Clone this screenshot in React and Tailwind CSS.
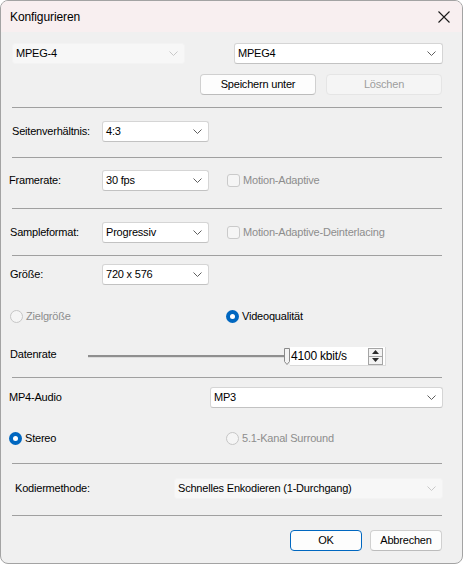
import React from 'react';

const font = { fontFamily: '"Liberation Sans", Arial, sans-serif' };

function Chevron({ color = '#5f5f5f' }) {
  return (
    <svg width="9" height="5" viewBox="0 0 9 5" className="shrink-0">
      <path d="M0.5 0.5 L4.5 4.5 L8.5 0.5" fill="none" stroke={color} strokeWidth="1" />
    </svg>
  );
}

function Combo({ w, text, disabled }) {
  return (
    <div
      className={`h-[21px] shrink-0 flex items-center justify-between pl-[3px] pr-[6px] rounded-[3px] border ${
        disabled ? 'bg-[#f7f7f7] border-[#f3f3f3]' : 'bg-white border-[#d5d5d5] border-b-[#c2c2c2]'
      }`}
      style={{ width: w }}
    >
      <span className="text-[11px] text-black leading-none">{text}</span>
      <Chevron color={disabled ? '#c8c8c8' : '#5f5f5f'} />
    </div>
  );
}

function Button({ w, children, disabled, primary }) {
  return (
    <div
      className={`h-[21px] shrink-0 flex items-center justify-center rounded-[4px] border text-[11px] ${
        disabled
          ? 'bg-[#f5f5f5] border-[#e5e5e5] text-[#9d9d9d]'
          : primary
          ? 'bg-[#fdfdfd] border-[#0067c0] text-black'
          : 'bg-[#fdfdfd] border-[#d0d0d0] border-b-[#bcbcbc] text-black'
      }`}
      style={{ width: w }}
    >
      {children}
    </div>
  );
}

function Sep({ mt }) {
  return <div className={`w-[430px] h-px bg-[#a0a0a0] ${mt}`} />;
}

function Radio({ checked, disabled, label }) {
  return (
    <div className="flex items-center gap-[3px]">
      {checked ? (
        <div className="w-[13px] h-[13px] rounded-full bg-[#0067c0] flex items-center justify-center">
          <div className="w-[5px] h-[5px] rounded-full bg-white" />
        </div>
      ) : (
        <div className="w-[13px] h-[13px] rounded-full border border-[#c6c6c6] bg-[#f5f5f5]" />
      )}
      <span className={`text-[11px] ${disabled ? 'text-[#8d8d8d]' : 'text-black'}`}>{label}</span>
    </div>
  );
}

function Check({ label }) {
  return (
    <div className="flex items-center gap-[3px]">
      <div className="w-[13px] h-[13px] rounded-[3px] border border-[#cacaca] bg-[#f5f5f5]" />
      <span className="text-[11px] text-[#8d8d8d]">{label}</span>
    </div>
  );
}

export default function App() {
  return (
    <div
      className="w-[463px] h-[564px] flex flex-col bg-[#f0f0f0] border border-[#a3a3a3] rounded-[8px] overflow-hidden"
      style={font}
    >
      {/* title bar */}
      <div className="h-[31px] shrink-0 flex items-center justify-between bg-[#f8eff0] pl-[9px] pr-[12px]">
        <span className="text-[12px] text-black tracking-[-0.1px]">Konfigurieren</span>
        <svg width="12" height="12" viewBox="0 0 12 12">
          <path d="M0.5 0.5 L11.5 11.5 M11.5 0.5 L0.5 11.5" stroke="#1a1a1a" strokeWidth="1.1" />
        </svg>
      </div>

      <div className="flex flex-col pl-[11px] tracking-[-0.2px]">
        <div className="mt-[11px] flex">
          <Combo w={173} text="MPEG-4" disabled />
          <div className="ml-[49px]">
            <Combo w={209} text="MPEG4" />
          </div>
        </div>

        <div className="mt-[10px] ml-[188px] flex gap-[10px]">
          <Button w={116}>Speichern unter</Button>
          <Button w={116} disabled>Löschen</Button>
        </div>

        <Sep mt="mt-[12px]" />

        <div className="mt-[13px] flex items-center">
          <span className="w-[90px] text-[11px]">Seitenverhältnis:</span>
          <Combo w={107} text="4:3" />
        </div>

        <Sep mt="mt-[15px]" />

        <div className="mt-[12px] flex items-center">
          <span className="w-[93px] -ml-[3px] text-[11px]">Framerate:</span>
          <Combo w={107} text="30 fps" />
          <div className="ml-[18px]">
            <Check label="Motion-Adaptive" />
          </div>
        </div>

        <Sep mt="mt-[17px]" />

        <div className="mt-[13px] flex items-center">
          <span className="w-[92px] -ml-[2px] text-[11px]">Sampleformat:</span>
          <Combo w={107} text="Progressiv" />
          <div className="ml-[18px]">
            <Check label="Motion-Adaptive-Deinterlacing" />
          </div>
        </div>

        <Sep mt="mt-[12px]" />

        <div className="mt-[8px] flex items-center">
          <span className="w-[92px] -ml-[2px] text-[11px]">Größe:</span>
          <Combo w={107} text="720 x 576" />
        </div>

        <div className="mt-[23px] h-[17px] flex items-center -ml-[2px]">
          <div className="w-[216px]">
            <Radio disabled label="Zielgröße" />
          </div>
          <Radio checked label="Videoqualität" />
        </div>

        <div className="mt-[22px] h-[19px] flex items-center -ml-[2px]">
          <span className="w-[78px] text-[11px] mb-[5px]">Datenrate</span>
          <div className="w-[196px] flex flex-col">
            <div className="h-[2px] bg-[#8f8f8f]" />
            <div className="h-px bg-[#dcdcdc]" />
          </div>
          <svg width="6" height="17" viewBox="0 0 6 17" className="shrink-0">
            <path d="M0.5 0.5 H5.5 V13.5 L3 16.5 L0.5 13.5 Z" fill="#f3f3f3" stroke="#8a8a8a" strokeWidth="1" />
          </svg>
          <div className="w-[96px] h-[19px] bg-white border-r border-b border-[#dadada] flex items-center justify-between pl-[1px] pr-[2px]">
            <span className="text-[12px] text-black">4100 kbit/s</span>
            <div className="w-[15px] h-[17px] border border-[#a5a5a5] flex flex-col bg-[#f3f3f3]">
              <div className="flex-1 flex items-center justify-center border-b border-[#a5a5a5]">
                <svg width="7" height="4" viewBox="0 0 7 4">
                  <path d="M0 4 L3.5 0 L7 4 Z" fill="#2a2a2a" />
                </svg>
              </div>
              <div className="flex-1 flex items-center justify-center">
                <svg width="7" height="4" viewBox="0 0 7 4">
                  <path d="M0 0 L3.5 4 L7 0 Z" fill="#2a2a2a" />
                </svg>
              </div>
            </div>
          </div>
        </div>

        <Sep mt="mt-[11px]" />

        <div className="mt-[9px] flex items-center">
          <span className="w-[201px] -ml-[3px] text-[11px]">MP4-Audio</span>
          <Combo w={233} text="MP3" />
        </div>

        <div className="mt-[22px] h-[17px] flex items-center -ml-[3px]">
          <div className="w-[217px]">
            <Radio checked label="Stereo" />
          </div>
          <Radio disabled label="5.1-Kanal Surround" />
        </div>

        <Sep mt="mt-[16px]" />

        <div className="mt-[14px] flex items-center">
          <span className="w-[159px] ml-[3px] text-[11px]">Kodiermethode:</span>
          <Combo w={269} text="Schnelles Enkodieren (1-Durchgang)" disabled />
        </div>

        <Sep mt="mt-[16px]" />

        <div className="mt-[14px] ml-[278px] flex gap-[8px]">
          <Button w={72} primary>OK</Button>
          <Button w={72}>Abbrechen</Button>
        </div>
      </div>
    </div>
  );
}
